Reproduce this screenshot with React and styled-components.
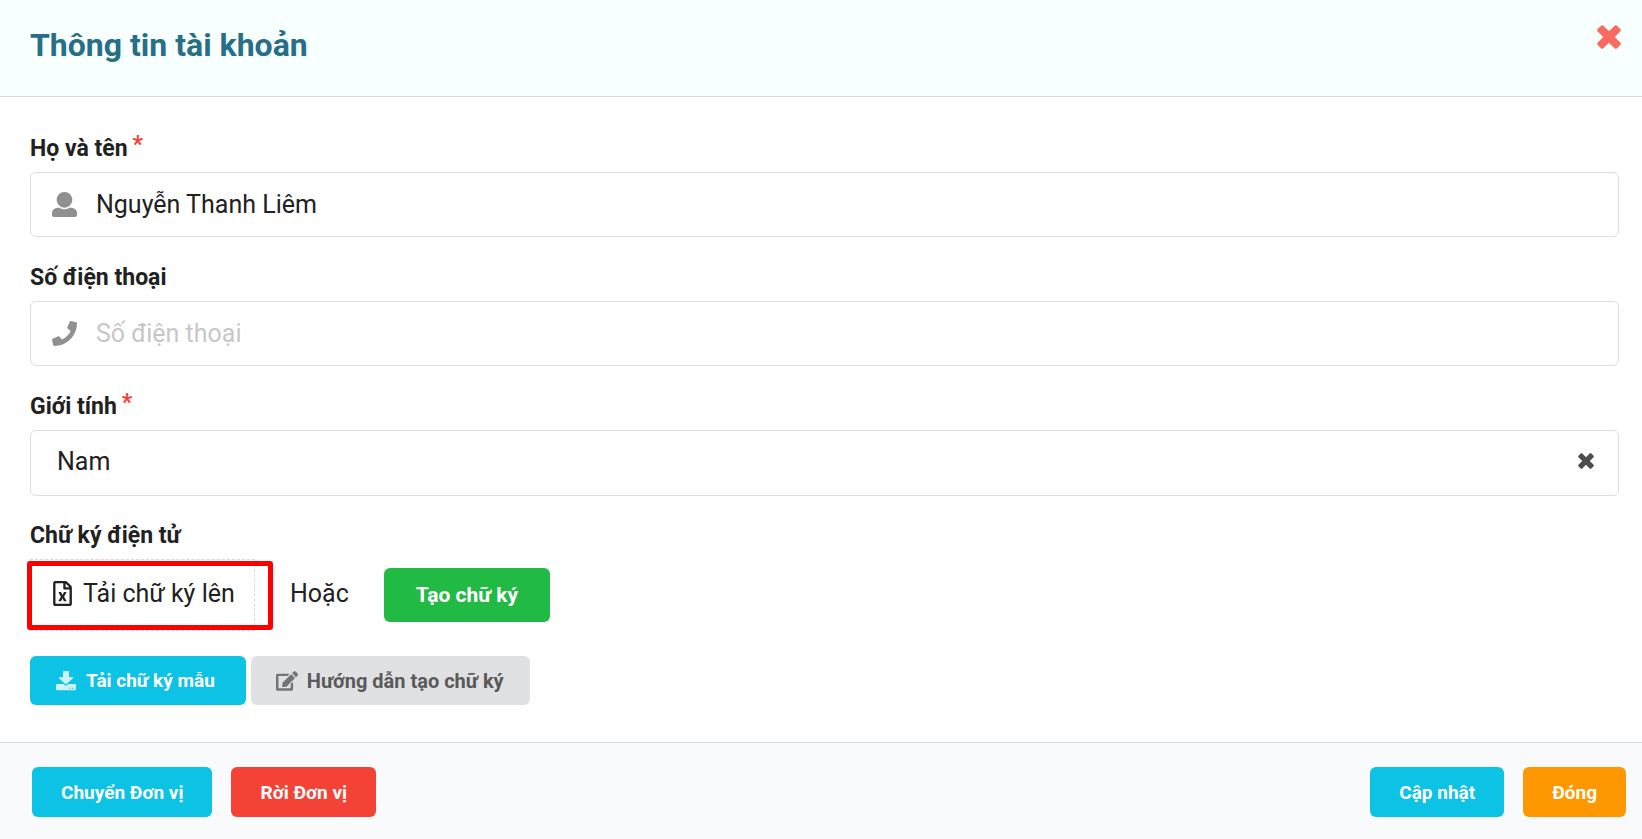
import styled, { createGlobalStyle } from 'styled-components';
import { FaPhone, FaEdit, FaRegFileExcel } from 'react-icons/fa';

const colors = {
    teal: '#0cc2e5',
    red: '#f44336',
    orange: '#ff9800',
    green: '#21ba45',
    grey: '#e0e1e2',
};

const CloseIcon = () => (
    <svg viewBox="0 0 24 24" fill="currentColor" aria-hidden="true">
        <path d="M23.3 17.6 L17.7 12 L23.3 6.4 Q24.4 5.2 23.3 4 L20 .7 Q18.8 -.4 17.6 .7 L12 6.3 L6.4 .7 Q5.2 -.4 4 .7 L.7 4 Q-.4 5.2 .7 6.4 L6.3 12 L.7 17.6 Q-.4 18.8 .7 20 L4 23.3 Q5.2 24.4 6.4 23.3 L12 17.7 L17.6 23.3 Q18.8 24.4 20 23.3 L23.3 20 Q24.4 18.8 23.3 17.6Z" />
    </svg>
);

const UserIcon = () => (
    <svg viewBox="0 0 512 512" fill="currentColor" aria-hidden="true">
        <path d="M256 0c88.366 0 160 71.634 160 160s-71.634 160-160 160S96 248.366 96 160 167.634 0 256 0zm183.283 333.821l-71.313-17.828c-74.923 53.89-165.738 41.864-223.94 0l-71.313 17.828C29.981 344.505 0 382.903 0 426.955V464c0 26.51 21.49 48 48 48h416c26.51 0 48-21.49 48-48v-37.045c0-44.052-29.981-82.45-72.717-93.134z" />
    </svg>
);

const DownloadIcon = () => (
    <svg viewBox="0 0 60 60" fill="currentColor" aria-hidden="true">
        <path d="M23 0h14q2 0 2 2v17h11q3 0 1 2.500L32 39q-2 2-4 0L9 21.500Q7 19 10 19h11V2q0-2 2-2z" />
        <path fillRule="evenodd" d="M3 39h20l4 4q3 2 6 0l4-4h20q3 0 3 3v13q0 3-3 3H3q-3 0-3-3V42q0-3 3-3zm37 11v3h4v-3zm8 0v3h4v-3z" />
    </svg>
);

const App = () => {
    return (
    <Modal>
        <GlobalStyle />
        <Header>
            <Title>Thông tin tài khoản</Title>
            <CloseButton type="button" aria-label="Đóng cửa sổ"><CloseIcon /></CloseButton>
        </Header>
        <Form id="account" onSubmit={(e) => e.preventDefault()}>
            <Field>
                <Label htmlFor="name">Họ và tên<Required>*</Required></Label>
                <Box>
                    <UserIcon />
                    <Input id="name" defaultValue="Nguyễn Thanh Liêm" required />
                </Box>
            </Field>
            <Field>
                <Label htmlFor="phone">Số điện thoại</Label>
                <Box>
                    <FaPhone />
                    <Input id="phone" type="tel" placeholder="Số điện thoại" />
                </Box>
            </Field>
            <Field>
                <Label htmlFor="gender">Giới tính<Required>*</Required></Label>
                <SelectBox>
                    <Select id="gender" defaultValue="Nam">
                        <option>Nam</option>
                        <option>Nữ</option>
                    </Select>
                    <ClearButton type="button" aria-label="Xóa lựa chọn"><CloseIcon /></ClearButton>
                </SelectBox>
            </Field>
            <Heading>Chữ ký điện tử</Heading>
            <SignRow>
                <Upload type="button">
                    <FaRegFileExcel />
                    Tải chữ ký lên
                </Upload>
                <Or>Hoặc</Or>
                <CreateButton type="button">Tạo chữ ký</CreateButton>
            </SignRow>
            <GuideRow>
                <GuideButton type="button" $bg={colors.teal}><DownloadIcon />Tải chữ ký mẫu</GuideButton>
                <HelpButton type="button" $bg={colors.grey} $color="#5a5a5a"><FaEdit />Hướng dẫn tạo chữ ký</HelpButton>
            </GuideRow>
        </Form>
        <Footer>
            <Group>
                <Button type="button" $bg={colors.teal}>Chuyển Đơn vị</Button>
                <Button type="button" $bg={colors.red}>Rời Đơn vị</Button>
            </Group>
            <Group>
                <Button type="submit" form="account" $bg={colors.teal}>Cập nhật</Button>
                <Button type="button" $bg={colors.orange}>Đóng</Button>
            </Group>
        </Footer>
    </Modal>
    )
};
export default App;

const GlobalStyle = createGlobalStyle`
*{
box-sizing:border-box;
}
body{
margin:0;
background:#fff;
color:#212121;
font-family:Roboto, sans-serif;
font-size:25px;
}
button, input, select{
font-family:inherit;
}
button{
cursor:pointer;
}
`;
const Modal = styled.main`
display:flex;
flex-direction:column;
min-height:100vh;
`;
const Header = styled.header`
display:flex;
justify-content:space-between;
align-items:flex-start;
padding:25px 21px 30px 30px;
background:#f7ffff;
border-bottom:1px solid #d4dadd;
`;
const Title = styled.h1`
margin:0;
color:#276f86;
font-size:32px;
line-height:41px;
font-weight:bold;
`;
const CloseButton = styled.button`
display:flex;
padding:0;
border:0;
background:none;
color:#f96a5f;
svg{
    width:24px;
    height:24px;
}
`;
const Form = styled.form`
flex:1;
padding:35px 23px 37px 30px;
`;
const Field = styled.div`
margin-bottom:24px;
`;
const Label = styled.label`
display:block;
margin-bottom:6px;
font-size:23px;
line-height:34px;
font-weight:bold;
`;
const Heading = styled.h2`
margin:0 0 7px;
font-size:23px;
line-height:32px;
font-weight:bold;
`;
const Required = styled.span`
margin-left:5px;
color:${colors.red};
line-height:0;
vertical-align:4px;
`;
const Box = styled.div`
display:flex;
align-items:center;
gap:19px;
height:65px;
padding:0 21px;
border:1px solid #dededf;
border-radius:6px;
& > svg{
    flex:none;
    width:25px;
    height:25px;
    color:#909090;
}
`;
const SelectBox = styled(Box)`
height:66px;
padding:0 24px 4px;
`;
const Input = styled.input`
flex:1;
min-width:0;
height:100%;
padding:0;
border:0;
outline:0;
background:none;
color:#212121;
font-size:25px;
&::placeholder{
    color:#c7c7c7;
}
`;
const Select = styled.select`
flex:1;
height:100%;
padding:0 2px;
border:0;
outline:0;
appearance:none;
background:none;
color:#212121;
font-size:25px;
`;
const ClearButton = styled.button`
display:flex;
padding:0;
border:0;
background:none;
color:#4d4d4d;
svg{
    width:16px;
    height:16px;
}
`;
const SignRow = styled.div`
display:flex;
align-items:center;
margin-bottom:25px;
`;
const Upload = styled.button`
position:relative;
display:flex;
align-items:center;
gap:11px;
width:225px;
height:72px;
padding:0 0 3px 22px;
border:1px dashed #d9d9d9;
background:none;
color:#212121;
font-size:25px;
white-space:nowrap;
svg{
    width:19px;
    height:25px;
}
&::after{
    content:'';
    position:absolute;
    inset:1px -19px 0 -4px;
    border:5px solid #f00;
    border-radius:3px;
}
`;
const Or = styled.span`
margin:0 35px 3px;
line-height:32px;
`;
const Button = styled.button`
display:flex;
align-items:center;
justify-content:center;
height:50px;
padding:0 29px;
border:0;
border-radius:6px;
background:${props => props.$bg};
color:${props => props.$color || '#fff'};
font-size:19px;
font-weight:bold;
white-space:nowrap;
`;
const CreateButton = styled(Button)`
height:54px;
padding:0 32px;
background:${colors.green};
font-size:21px;
`;
const GuideRow = styled.div`
display:flex;
gap:5px;
`;
const GuideButton = styled(Button)`
gap:10px;
height:49px;
padding:0 31px 0 26px;
svg{
    width:20px;
    height:20px;
    opacity:0.8;
}
`;
const HelpButton = styled(GuideButton)`
gap:9px;
padding:0 26px 0 25px;
font-size:20px;
svg{
    width:22px;
}
`;
const Footer = styled.footer`
display:flex;
justify-content:space-between;
padding:24px 16px 22px 32px;
background:#f9fafb;
border-top:1px solid #d4d8dd;
`;
const Group = styled.div`
display:flex;
gap:19px;
`;
